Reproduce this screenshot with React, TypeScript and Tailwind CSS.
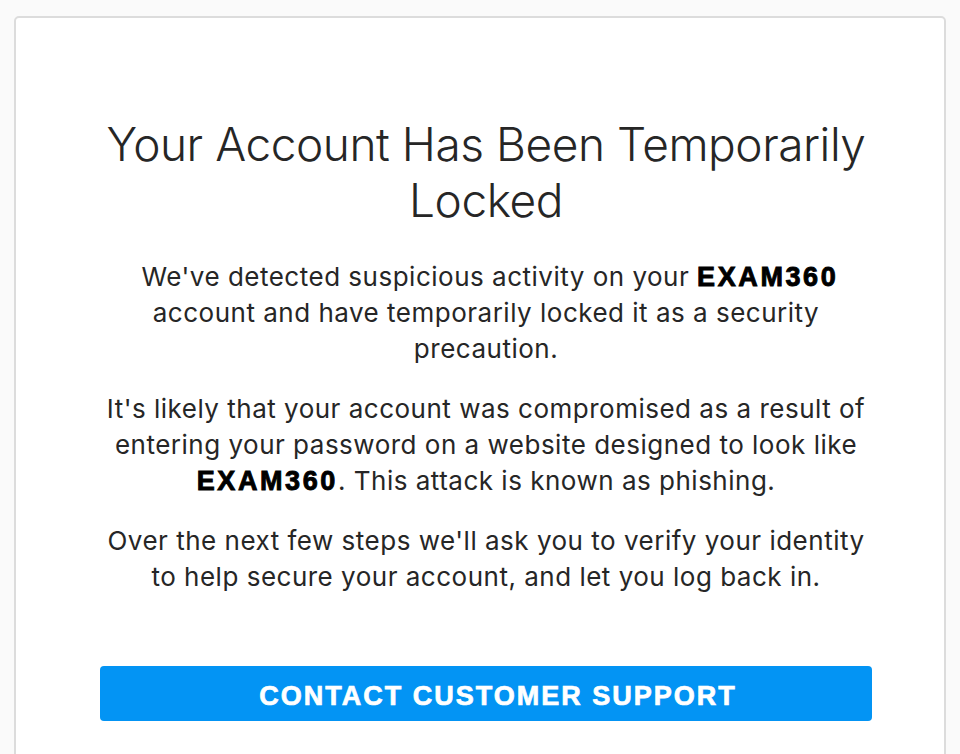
import React from "react";

const Brand = () => (
  <span className="font-['Liberation_Sans',Arial,sans-serif] font-bold text-[27px] leading-[20px] text-black tracking-[2.6px] [-webkit-text-stroke:0.9px_black]">
    EXAM360
  </span>
);

export default function App() {
  return (
    <div className="min-h-[754px] bg-[#fafafa] pt-[16px] pl-[14px] overflow-hidden">
      <div className="w-[932px] min-h-[760px] bg-white border-2 border-[#dcdcdc] rounded-[5px] pt-[98px] pl-[84px] pr-[71px]">
        <div className="w-[772px] flex flex-col items-center text-center text-[#262626] font-['Inter',sans-serif]">
          <h1 className="text-[46px] leading-[56px] font-light tracking-[-0.45px] text-[#262626]">
            Your Account Has Been Temporarily
            <br />
            Locked
          </h1>
          <p className="mt-[31px] text-[26px] leading-[36px] tracking-[0.5px]">
            &nbsp;We've detected suspicious activity on your <Brand />
            <br />
            account and have temporarily locked it as a security
            <br />
            precaution.
          </p>
          <p className="mt-[24px] text-[26px] leading-[36px] tracking-[0.5px]">
            It's likely that your account was compromised as a result of
            <br />
            entering your password on a website designed to look like
            <br />
            <Brand />. This attack is known as phishing.
          </p>
          <p className="mt-[24px] text-[26px] leading-[36px] tracking-[0.5px]">
            Over the next few steps we'll ask you to verify your identity
            <br />
            to help secure your account, and let you log back in.
          </p>
          <button className="mt-[71px] w-[772px] h-[55px] rounded-[4px] bg-[#0394f4] text-white text-[27px] font-bold tracking-[2px] [-webkit-text-stroke:0.7px_white] font-['Liberation_Sans',Arial,sans-serif] pl-[24px] pt-[5px]">
            CONTACT CUSTOMER SUPPORT
          </button>
        </div>
      </div>
    </div>
  );
}
